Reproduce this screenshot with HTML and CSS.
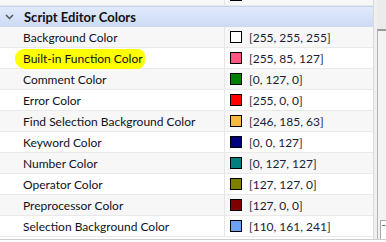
FILE: index.html
```html
<!DOCTYPE html>
<html lang="en">
<head>
    <meta charset="UTF-8">
    <title>Script Editor Colors</title>
    <link rel="stylesheet" href="styles.css">
</head>
<body>
    <div class="window">
        <div class="grid">
            <div class="row prev alt">
                <div class="name"></div>
                <div class="value"><span class="swatch" style="background-color: rgb(204, 204, 204)"></span></div>
            </div>

            <div class="category">
                <svg class="chevron" width="9" height="6" viewBox="0 0 9 6">
                    <path d="M1 1 L4.5 4.5 L8 1" fill="none" stroke="#555" stroke-width="1.5"/>
                </svg>
                <span>Script Editor Colors</span>
            </div>

            <div class="row alt">
                <div class="name">Background Color</div>
                <div class="value"><span class="swatch" style="background-color: rgb(255, 255, 255)"></span>[255, 255, 255]</div>
            </div>
            <div class="row">
                <div class="name"><span class="marker">Built-in Function Color</span></div>
                <div class="value"><span class="swatch" style="background-color: rgb(255, 85, 127)"></span>[255, 85, 127]</div>
            </div>
            <div class="row alt">
                <div class="name">Comment Color</div>
                <div class="value"><span class="swatch" style="background-color: rgb(0, 127, 0)"></span>[0, 127, 0]</div>
            </div>
            <div class="row">
                <div class="name">Error Color</div>
                <div class="value"><span class="swatch" style="background-color: rgb(255, 0, 0)"></span>[255, 0, 0]</div>
            </div>
            <div class="row alt">
                <div class="name">Find Selection Background Color</div>
                <div class="value"><span class="swatch" style="background-color: rgb(246, 185, 63)"></span>[246, 185, 63]</div>
            </div>
            <div class="row">
                <div class="name">Keyword Color</div>
                <div class="value"><span class="swatch" style="background-color: rgb(0, 0, 127)"></span>[0, 0, 127]</div>
            </div>
            <div class="row alt">
                <div class="name">Number Color</div>
                <div class="value"><span class="swatch" style="background-color: rgb(0, 127, 127)"></span>[0, 127, 127]</div>
            </div>
            <div class="row">
                <div class="name">Operator Color</div>
                <div class="value"><span class="swatch" style="background-color: rgb(127, 127, 0)"></span>[127, 127, 0]</div>
            </div>
            <div class="row alt">
                <div class="name">Preprocessor Color</div>
                <div class="value"><span class="swatch" style="background-color: rgb(127, 0, 0)"></span>[127, 0, 0]</div>
            </div>
            <div class="row">
                <div class="name">Selection Background Color</div>
                <div class="value"><span class="swatch" style="background-color: rgb(110, 161, 241)"></span>[110, 161, 241]</div>
            </div>
        </div>

        <div class="gutter"></div>

        <div class="side">
            <div class="side-top"></div>
            <div class="side-panel">
                <div class="side-box">&#x2c9;</div>
            </div>
        </div>
    </div>
</body>
</html>
```

FILE: styles.css
```css
body {
    margin: 0;
    background-color: #ffffff;
    font-family: Lato, "Noto Sans", sans-serif;
    font-size: 12px;
    color: #111122;
    overflow: hidden;
}

.window {
    display: flex;
    height: 239px;
    border-bottom: 1px solid #cfcfcf;
    overflow: hidden;
}

.grid {
    width: 377px;
    border-right: 1px solid #dadada;
    overflow: hidden;
}

.row {
    display: flex;
    height: 20px;
    border-bottom: 1px solid #e9e9e9;
    background-color: #ffffff;
}

.row.alt {
    background-color: #f7f7f7;
}

.row.prev {
    margin-top: -15px;
}

.name {
    width: 201px;
    padding-left: 23px;
    padding-top: 1px;
    border-right: 1px solid #e6e6e6;
    display: flex;
    align-items: center;
    white-space: nowrap;
}

.value {
    flex: 1;
    padding-left: 5px;
    padding-top: 1px;
    display: flex;
    align-items: center;
    gap: 7px;
    color: #1c1c36;
    white-space: nowrap;
}

.swatch {
    width: 10px;
    height: 10px;
    margin-top: -1px;
    border: 1px solid #000000;
}

.marker {
    background-color: #ffff00;
    margin-left: -8px;
    padding: 2px 2px 3px 8px;
    border-radius: 9px 7px 8px 10px;
}

.category {
    display: flex;
    align-items: center;
    height: 20px;
    border-top: 1px solid #c4d2ea;
    background: linear-gradient(#e0eafb, #cbdaf4);
    font-weight: bold;
    font-size: 13px;
    color: #111111;
}

.chevron {
    margin-left: 5px;
    margin-right: 10px;
}

.gutter {
    width: 3px;
    background-color: #f0f0f0;
}

.side {
    flex: 1;
    display: flex;
    flex-direction: column;
    background-color: #ebebeb;
}

.side-top {
    height: 29px;
}

.side-panel {
    flex: 1;
    border-top: 2px solid #9a9a9a;
    border-left: 1px solid #b5b5b5;
    background-color: #f3f3f3;
    display: flex;
    flex-direction: column;
    justify-content: flex-end;
}

.side-box {
    height: 18px;
    margin-left: 2px;
    border-top: 1px solid #a8a8a8;
    border-left: 1px solid #a8a8a8;
    background-color: #ffffff;
    font-size: 12px;
    line-height: 16px;
    color: #333;
    overflow: hidden;
}
```
